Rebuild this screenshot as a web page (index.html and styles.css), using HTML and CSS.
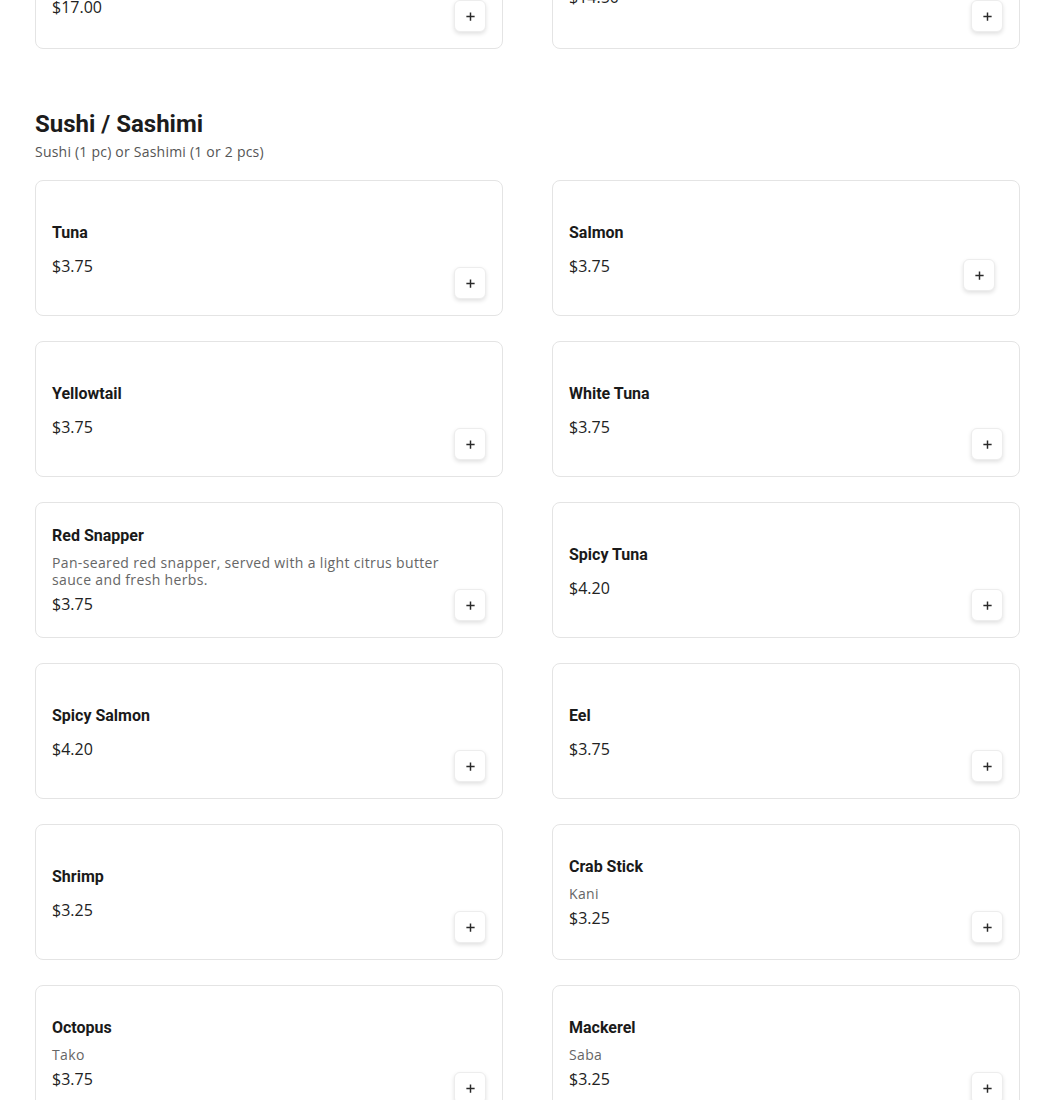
FILE: index.html
```html
<!DOCTYPE html>
<html lang="en">
<head>
<meta charset="utf-8">
<title>Menu</title>
<link rel="stylesheet" href="styles.css">
</head>
<body>
<main class="menu">
  <section class="section section--prev">
    <div class="grid">
      <div class="card">
        <div class="info">
          <div class="name">Chef's Special Roll</div>
          <div class="desc">Assorted fish with avocado and cucumber</div>
          <div class="price">$17.00</div>
        </div>
        <button class="add" aria-label="Add"><svg viewBox="0 0 12 12"><path d="M6 1.5v9M1.5 6h9"/></svg></button>
      </div>
      <div class="card">
        <div class="info info--top">
          <div class="name">Rainbow Roll</div>
          <div class="price">$14.50</div>
        </div>
        <button class="add" aria-label="Add"><svg viewBox="0 0 12 12"><path d="M6 1.5v9M1.5 6h9"/></svg></button>
      </div>
    </div>
  </section>

  <section class="section">
    <h2 class="title">Sushi / Sashimi</h2>
    <p class="subtitle">Sushi (1 pc) or Sashimi (1 or 2 pcs)</p>
    <div class="grid">
      <div class="card">
        <div class="info"><div class="name">Tuna</div><div class="price">$3.75</div></div>
        <button class="add" aria-label="Add"><svg viewBox="0 0 12 12"><path d="M6 1.5v9M1.5 6h9"/></svg></button>
      </div>
      <div class="card">
        <div class="info"><div class="name">Salmon</div><div class="price">$3.75</div></div>
        <button class="add add--shifted" aria-label="Add"><svg viewBox="0 0 12 12"><path d="M6 1.5v9M1.5 6h9"/></svg></button>
      </div>
      <div class="card">
        <div class="info"><div class="name">Yellowtail</div><div class="price">$3.75</div></div>
        <button class="add" aria-label="Add"><svg viewBox="0 0 12 12"><path d="M6 1.5v9M1.5 6h9"/></svg></button>
      </div>
      <div class="card">
        <div class="info"><div class="name">White Tuna</div><div class="price">$3.75</div></div>
        <button class="add" aria-label="Add"><svg viewBox="0 0 12 12"><path d="M6 1.5v9M1.5 6h9"/></svg></button>
      </div>
      <div class="card">
        <div class="info"><div class="name">Red Snapper</div><div class="desc">Pan-seared red snapper, served with a light citrus butter sauce and fresh herbs.</div><div class="price">$3.75</div></div>
        <button class="add" aria-label="Add"><svg viewBox="0 0 12 12"><path d="M6 1.5v9M1.5 6h9"/></svg></button>
      </div>
      <div class="card">
        <div class="info"><div class="name">Spicy Tuna</div><div class="price">$4.20</div></div>
        <button class="add" aria-label="Add"><svg viewBox="0 0 12 12"><path d="M6 1.5v9M1.5 6h9"/></svg></button>
      </div>
      <div class="card">
        <div class="info"><div class="name">Spicy Salmon</div><div class="price">$4.20</div></div>
        <button class="add" aria-label="Add"><svg viewBox="0 0 12 12"><path d="M6 1.5v9M1.5 6h9"/></svg></button>
      </div>
      <div class="card">
        <div class="info"><div class="name">Eel</div><div class="price">$3.75</div></div>
        <button class="add" aria-label="Add"><svg viewBox="0 0 12 12"><path d="M6 1.5v9M1.5 6h9"/></svg></button>
      </div>
      <div class="card">
        <div class="info"><div class="name">Shrimp</div><div class="price">$3.25</div></div>
        <button class="add" aria-label="Add"><svg viewBox="0 0 12 12"><path d="M6 1.5v9M1.5 6h9"/></svg></button>
      </div>
      <div class="card">
        <div class="info"><div class="name">Crab Stick</div><div class="desc">Kani</div><div class="price">$3.25</div></div>
        <button class="add" aria-label="Add"><svg viewBox="0 0 12 12"><path d="M6 1.5v9M1.5 6h9"/></svg></button>
      </div>
      <div class="card">
        <div class="info"><div class="name">Octopus</div><div class="desc">Tako</div><div class="price">$3.75</div></div>
        <button class="add" aria-label="Add"><svg viewBox="0 0 12 12"><path d="M6 1.5v9M1.5 6h9"/></svg></button>
      </div>
      <div class="card">
        <div class="info"><div class="name">Mackerel</div><div class="desc">Saba</div><div class="price">$3.25</div></div>
        <button class="add" aria-label="Add"><svg viewBox="0 0 12 12"><path d="M6 1.5v9M1.5 6h9"/></svg></button>
      </div>
    </div>
  </section>
</main>
</body>
</html>
```

FILE: styles.css
```css
* { box-sizing: border-box; }

html, body {
  margin: 0;
  background: #ffffff;
  overflow: hidden;
}

body {
  font-family: "Open Sans", "Noto Sans", sans-serif;
  color: #222;
}

.menu {
  padding: 0 30px 0 35px;
  margin-top: -87px;
}

.section--prev {
  margin-bottom: 59px;
}

.title {
  font-family: Roboto, "Liberation Sans", sans-serif;
  font-weight: 700;
  font-size: 24px;
  line-height: 32px;
  margin: 0;
  color: #1c1c1c;
}

.subtitle {
  margin: 2px 0 18px;
  font-size: 14px;
  line-height: 20px;
  letter-spacing: 0.22px;
  color: #555;
}

.grid {
  display: grid;
  grid-template-columns: 468px 468px;
  column-gap: 49px;
  row-gap: 25px;
}

.card {
  height: 136px;
  border: 1px solid #e4e4e4;
  border-radius: 8px;
  background: #fff;
  display: flex;
  align-items: center;
  padding: 0 16px;
}

.info {
  flex: 1;
  min-width: 0;
}

.info:has(> .desc) {
  padding-top: 2px;
}

.info:has(> .name + .price) {
  padding-top: 4px;
}

.info--top:has(> .name + .price) {
  padding-top: 0;
}

.name {
  font-family: Roboto, "Liberation Sans", sans-serif;
  font-weight: 700;
  font-size: 16px;
  line-height: 20px;
  color: #1a1a1a;
  margin-bottom: 8px;
}

.desc {
  font-size: 14px;
  line-height: 17px;
  letter-spacing: 0.35px;
  color: #666;
  margin-bottom: 4px;
}

.price {
  font-size: 16px;
  line-height: 24px;
  color: #222;
}

.name + .price { margin-top: 11px; }

.add {
  align-self: flex-end;
  margin-bottom: 16px;
  flex: none;
  width: 32px;
  height: 32px;
  padding: 0;
  border: 1px solid #ededed;
  border-radius: 6px;
  background: #fff;
  box-shadow: 0 2px 4px rgba(0, 0, 0, 0.12);
  display: flex;
  align-items: center;
  justify-content: center;
  cursor: pointer;
}

.add svg {
  width: 11px;
  height: 11px;
  fill: none;
  stroke: #2a2a2a;
  stroke-width: 1.6;
}

.add--shifted {
  margin-bottom: 24px;
  margin-right: 8px;
}
```
